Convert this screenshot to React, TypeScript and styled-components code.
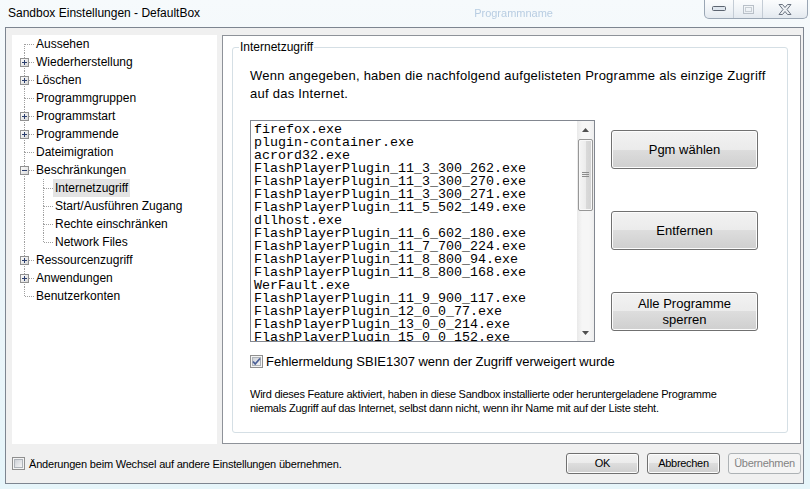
import { createGlobalStyle } from 'styled-components';
import styled from 'styled-components';

const GlobalStyle = createGlobalStyle`
  html, body {
    margin: 0;
    padding: 0;
  }
  body {
    width: 810px;
    height: 489px;
    overflow: hidden;
    font-family: 'Liberation Sans', Arial, sans-serif;
    background: linear-gradient(180deg, #f6fafc 0%, #eef5f9 40%, #e6f5fa 100%);
  }
`;

type TreeItem = {
  label: string;
  level: 0 | 1;
  expander?: '+' | '-';
  selected?: boolean;
};

const treeItems: TreeItem[] = [
  { label: 'Aussehen', level: 0 },
  { label: 'Wiederherstellung', level: 0, expander: '+' },
  { label: 'Löschen', level: 0, expander: '+' },
  { label: 'Programmgruppen', level: 0 },
  { label: 'Programmstart', level: 0, expander: '+' },
  { label: 'Programmende', level: 0, expander: '+' },
  { label: 'Dateimigration', level: 0 },
  { label: 'Beschränkungen', level: 0, expander: '-' },
  { label: 'Internetzugriff', level: 1, selected: true },
  { label: 'Start/Ausführen Zugang', level: 1 },
  { label: 'Rechte einschränken', level: 1 },
  { label: 'Network Files', level: 1 },
  { label: 'Ressourcenzugriff', level: 0, expander: '+' },
  { label: 'Anwendungen', level: 0, expander: '+' },
  { label: 'Benutzerkonten', level: 0 },
];

const programs = [
  'firefox.exe',
  'plugin-container.exe',
  'acrord32.exe',
  'FlashPlayerPlugin_11_3_300_262.exe',
  'FlashPlayerPlugin_11_3_300_270.exe',
  'FlashPlayerPlugin_11_3_300_271.exe',
  'FlashPlayerPlugin_11_5_502_149.exe',
  'dllhost.exe',
  'FlashPlayerPlugin_11_6_602_180.exe',
  'FlashPlayerPlugin_11_7_700_224.exe',
  'FlashPlayerPlugin_11_8_800_94.exe',
  'FlashPlayerPlugin_11_8_800_168.exe',
  'WerFault.exe',
  'FlashPlayerPlugin_11_9_900_117.exe',
  'FlashPlayerPlugin_12_0_0_77.exe',
  'FlashPlayerPlugin_13_0_0_214.exe',
  'FlashPlayerPlugin_15_0_0_152.exe',
];

// one 19x18 cell of the tree's dotted connector lines
function Connector({
  up,
  down,
  branch,
  expander,
}: {
  up: boolean;
  down: boolean;
  branch: boolean;
  expander?: '+' | '-';
}) {
  return (
    <svg width="19" height="18" viewBox="0 0 19 18" style={{ flexShrink: 0 }}>
      <g stroke="#a0a0a0" strokeWidth="1" strokeDasharray="1 1" fill="none">
        {up && <line x1="9.5" y1="0" x2="9.5" y2="9" />}
        {down && <line x1="9.5" y1="9" x2="9.5" y2="18" />}
        {branch && <line x1="10" y1="9.5" x2="19" y2="9.5" />}
      </g>
      {expander && (
        <g>
          <defs>
            <linearGradient id="exp" x1="0" y1="0" x2="1" y2="1">
              <stop offset="0" stopColor="#ffffff" />
              <stop offset="1" stopColor="#d6d6d6" />
            </linearGradient>
          </defs>
          <rect x="5.5" y="5.5" width="8" height="8" fill="url(#exp)" stroke="#919191" />
          <line x1="7" y1="9.5" x2="12" y2="9.5" stroke="#2c3f6e" />
          {expander === '+' && <line x1="9.5" y1="7" x2="9.5" y2="12" stroke="#2c3f6e" />}
        </g>
      )}
    </svg>
  );
}

function SettingsTree() {
  const lastRoot = treeItems.length - 1;
  return (
    <Tree>
      {treeItems.map((item, i) => {
        const next = treeItems[i + 1];
        const lastChild = item.level === 1 && (!next || next.level === 0);
        return (
          <TreeRow key={item.label}>
            {item.level === 0 ? (
              <Connector up={i > 0} down={i < lastRoot} branch expander={item.expander} />
            ) : (
              <>
                <Connector up down branch={false} />
                <Connector up down={!lastChild} branch />
              </>
            )}
            <TreeLabel $selected={item.selected}>{item.label}</TreeLabel>
          </TreeRow>
        );
      })}
    </Tree>
  );
}

function CheckBox({ checked }: { checked?: boolean }) {
  return (
    <svg width="13" height="13" viewBox="0 0 13 13" style={{ flexShrink: 0 }}>
      <defs>
        <linearGradient id="cb" x1="0" y1="0" x2="1" y2="1">
          <stop offset="0" stopColor="#cbcfd5" />
          <stop offset="1" stopColor="#f7f7f7" />
        </linearGradient>
      </defs>
      <rect x="0.5" y="0.5" width="12" height="12" fill="#f4f4f4" stroke="#8f8f8f" />
      <rect x="2.5" y="2.5" width="8" height="8" fill="url(#cb)" stroke="#aeb3b9" />
      {checked && (
        <path d="M3 6.5 L5.2 9 L10 3.5" stroke="#4a5f97" strokeWidth="1.8" fill="none" />
      )}
    </svg>
  );
}

function ScrollBar() {
  return (
    <Scroll>
      <ScrollArrow>
        <svg width="7" height="4" viewBox="0 0 7 4">
          <path d="M0 4 L3.5 0 L7 4 Z" fill="#505050" />
        </svg>
      </ScrollArrow>
      <ScrollTrack>
        <Thumb>
          <svg width="7" height="6" viewBox="0 0 7 6">
            <g stroke="#8c8c8c">
              <line x1="0" y1="0.5" x2="7" y2="0.5" />
              <line x1="0" y1="2.5" x2="7" y2="2.5" />
              <line x1="0" y1="4.5" x2="7" y2="4.5" />
            </g>
          </svg>
        </Thumb>
      </ScrollTrack>
      <ScrollArrow>
        <svg width="7" height="4" viewBox="0 0 7 4">
          <path d="M0 0 L7 0 L3.5 4 Z" fill="#505050" />
        </svg>
      </ScrollArrow>
    </Scroll>
  );
}

function CaptionButtons() {
  return (
    <Caption>
      <CaptionBtn $w={28}>
        <svg width="14" height="6" viewBox="0 0 14 6">
          <rect x="0.5" y="0.5" width="13" height="4" rx="1" fill="#dfe6ee" stroke="#5c6470" />
        </svg>
      </CaptionBtn>
      <CaptionBtn $w={28}>
        <svg width="11" height="9" viewBox="0 0 11 9">
          <rect x="0.5" y="0.5" width="10" height="8" fill="none" stroke="#b9c0c8" />
          <rect x="2.5" y="2.5" width="6" height="4" fill="none" stroke="#c8ced4" />
        </svg>
      </CaptionBtn>
      <CaptionBtn $w={44} $last>
        <svg width="14" height="11" viewBox="0 0 14 11">
          <path
            d="M1 0.5 H4.5 L7 3.5 L9.5 0.5 H13 L9 5.5 L13 10.5 H9.5 L7 7.5 L4.5 10.5 H1 L5 5.5 Z"
            fill="#eef1f4"
            stroke="#6a7380"
          />
        </svg>
      </CaptionBtn>
    </Caption>
  );
}

export default function App() {
  return (
    <>
      <GlobalStyle />
      <Window>
        <TitleBar>
          <Title>Sandbox Einstellungen - DefaultBox</Title>
          <Ghost>Programmname</Ghost>
          <CaptionButtons />
        </TitleBar>
        <Client>
          <MainRow>
            <SettingsTree />
            <Panel>
              <Group>
                <Legend>Internetzugriff</Legend>
                <Intro>
                  Wenn angegeben, haben die nachfolgend aufgelisteten Programme als einzige Zugriff
                  <br />
                  auf das Internet.
                </Intro>
                <ListRow>
                  <ListBox>
                    <ListItems>
                      {programs.map((p) => (
                        <ListItem key={p}>{p}</ListItem>
                      ))}
                    </ListItems>
                    <ScrollBar />
                  </ListBox>
                  <ButtonColumn>
                    <Button>Pgm wählen</Button>
                    <Button>Entfernen</Button>
                    <Button>
                      Alle Programme
                      <br />
                      sperren
                    </Button>
                  </ButtonColumn>
                </ListRow>
                <CheckRow>
                  <CheckBox checked />
                  <CheckLabel $size={13} $spacing={0}>
                    Fehlermeldung SBIE1307 wenn der Zugriff verweigert wurde
                  </CheckLabel>
                </CheckRow>
                <Note>
                  Wird dieses Feature aktiviert, haben in diese Sandbox installierte oder heruntergeladene
                  Programme
                  <br />
                  niemals Zugriff auf das Internet, selbst dann nicht, wenn ihr Name mit auf der Liste steht.
                </Note>
              </Group>
            </Panel>
          </MainRow>
          <BottomRow>
            <CheckRow $tight>
              <CheckBox />
              <CheckLabel $size={11} $spacing={-0.2}>
                Änderungen beim Wechsel auf andere Einstellungen übernehmen.
              </CheckLabel>
            </CheckRow>
            <DialogButtons>
              <DialogButton>OK</DialogButton>
              <DialogButton>Abbrechen</DialogButton>
              <DialogButton disabled>Übernehmen</DialogButton>
            </DialogButtons>
          </BottomRow>
        </Client>
      </Window>
    </>
  );
}

const Window = styled.div`
  display: flex;
  flex-direction: column;
  width: 810px;
  height: 489px;
`;

const TitleBar = styled.div`
  display: flex;
  align-items: flex-start;
  height: 27px;
  flex-shrink: 0;
`;

const Title = styled.div`
  padding-left: 8px;
  line-height: 26px;
  font-size: 12px;
  color: #000;
  white-space: nowrap;
`;

const Ghost = styled.div`
  margin-left: 274px;
  line-height: 26px;
  font-size: 11px;
  color: #b8cde2;
  filter: blur(0.7px);
`;

const Caption = styled.div`
  display: flex;
  margin-left: auto;
  margin-right: 2px;
  height: 18px;
  border: 1px solid #9aa6b4;
  border-top: none;
  border-radius: 0 0 5px 5px;
  overflow: hidden;
  background: linear-gradient(180deg, #fbfcfd 0%, #eef2f6 60%, #e3e9ef 100%);
`;

const CaptionBtn = styled.div<{ $w: number; $last?: boolean }>`
  display: flex;
  align-items: center;
  justify-content: center;
  width: ${(p) => p.$w}px;
  border-right: ${(p) => (p.$last ? 'none' : '1px solid #c4ccd5')};
`;

const Client = styled.div`
  flex: 1;
  display: flex;
  flex-direction: column;
  margin: 0 6px 5px 5px;
  padding: 7px 2px 0 6px;
  border: 1px solid #7d8590;
  background: #f0f0f0;
`;

const MainRow = styled.div`
  display: flex;
  gap: 5px;
  height: 409px;
`;

const Tree = styled.div`
  width: 205px;
  flex-shrink: 0;
  background: #fff;
  padding-left: 3px;
  box-sizing: border-box;
`;

const TreeRow = styled.div`
  display: flex;
  align-items: center;
  height: 18px;
`;

const TreeLabel = styled.span<{ $selected?: boolean }>`
  padding: 0 2px;
  line-height: 18px;
  font-size: 12px;
  color: #000;
  white-space: nowrap;
  background: ${(p) => (p.$selected ? '#e3e3e3' : 'transparent')};
`;

const Panel = styled.div`
  flex: 1;
  background: #fff;
  border: 1px solid #8e9299;
  padding: 4px 12px 10px 9px;
`;

const Group = styled.fieldset`
  margin: 0;
  min-width: 0;
  height: 100%;
  box-sizing: border-box;
  padding: 13px 10px 0 17px;
  border: 1px solid #d5dfe5;
  border-radius: 3px;
`;

const Legend = styled.legend`
  padding: 0 1px;
  margin-left: -11px;
  font-size: 12px;
  line-height: 14px;
  color: #000;
`;

const Intro = styled.p`
  margin: 0;
  font-size: 13px;
  line-height: 18px;
  letter-spacing: 0.25px;
  color: #000;
  white-space: nowrap;
`;

const ListRow = styled.div`
  display: flex;
  gap: 16px;
  margin-top: 17px;
`;

const ListBox = styled.div`
  display: flex;
  width: 345px;
  height: 222px;
  box-sizing: border-box;
  border: 1px solid #828790;
  background: #fff;
`;

const ListItems = styled.div`
  flex: 1;
  overflow: hidden;
  padding: 2px 3px;
`;

const ListItem = styled.div`
  font-family: 'Liberation Mono', 'Courier New', monospace;
  font-size: 13.33px;
  line-height: 13px;
  height: 13px;
  color: #000;
  white-space: nowrap;
`;

const Scroll = styled.div`
  display: flex;
  flex-direction: column;
  width: 17px;
  background: linear-gradient(90deg, #e9e9e9 0%, #f6f6f6 30%, #f6f6f6 70%, #eeeeee 100%);
`;

const ScrollArrow = styled.div`
  display: flex;
  align-items: center;
  justify-content: center;
  height: 17px;
  flex-shrink: 0;
`;

const ScrollTrack = styled.div`
  flex: 1;
  padding: 1px 1px 0 1px;
`;

const Thumb = styled.div`
  display: flex;
  align-items: center;
  justify-content: center;
  height: 70px;
  border: 1px solid #979797;
  border-radius: 2px;
  background: linear-gradient(90deg, #f5f5f5 0%, #ececec 50%, #dadada 51%, #d2d2d2 100%);
  box-shadow: inset 0 0 0 1px #f8f8f8;
`;

const ButtonColumn = styled.div`
  display: flex;
  flex-direction: column;
  gap: 42px;
  padding-top: 10px;
`;

const Button = styled.button`
  width: 147px;
  height: 39px;
  padding: 0;
  border: 1px solid #707070;
  border-radius: 3px;
  background: linear-gradient(180deg, #f2f2f2 0%, #ebebeb 50%, #dddddd 50%, #cfcfcf 100%);
  box-shadow: inset 0 0 0 1px #fcfcfc;
  font-family: 'Liberation Sans', Arial, sans-serif;
  font-size: 13px;
  line-height: 16px;
  color: #000;
`;

const CheckRow = styled.div<{ $tight?: boolean }>`
  display: flex;
  align-items: center;
  gap: ${(p) => (p.$tight ? 4 : 3)}px;
  height: 18px;
  margin-top: ${(p) => (p.$tight ? 0 : 10)}px;
`;

const CheckLabel = styled.span<{ $size: number; $spacing: number }>`
  font-size: ${(p) => p.$size}px;
  letter-spacing: ${(p) => p.$spacing}px;
  color: #000;
  white-space: nowrap;
`;

const Note = styled.p`
  margin: 17px 0 0;
  font-size: 11px;
  line-height: 14px;
  letter-spacing: -0.25px;
  color: #000;
  white-space: nowrap;
`;

const BottomRow = styled.div`
  flex: 1;
  display: flex;
  align-items: center;
  justify-content: space-between;
`;

const DialogButtons = styled.div`
  display: flex;
  gap: 8px;
  margin-top: -1px;
`;

const DialogButton = styled.button`
  width: 73px;
  height: 21px;
  padding: 0;
  border: 1px solid #707070;
  border-radius: 3px;
  background: linear-gradient(180deg, #f2f2f2 0%, #ebebeb 50%, #dddddd 50%, #cfcfcf 100%);
  box-shadow: inset 0 0 0 1px #fcfcfc;
  font-family: 'Liberation Sans', Arial, sans-serif;
  font-size: 11px;
  letter-spacing: -0.3px;
  color: #000;

  &:disabled {
    border-color: #adb2b5;
    background: #f4f4f4;
    box-shadow: none;
    color: #838383;
  }
`;
